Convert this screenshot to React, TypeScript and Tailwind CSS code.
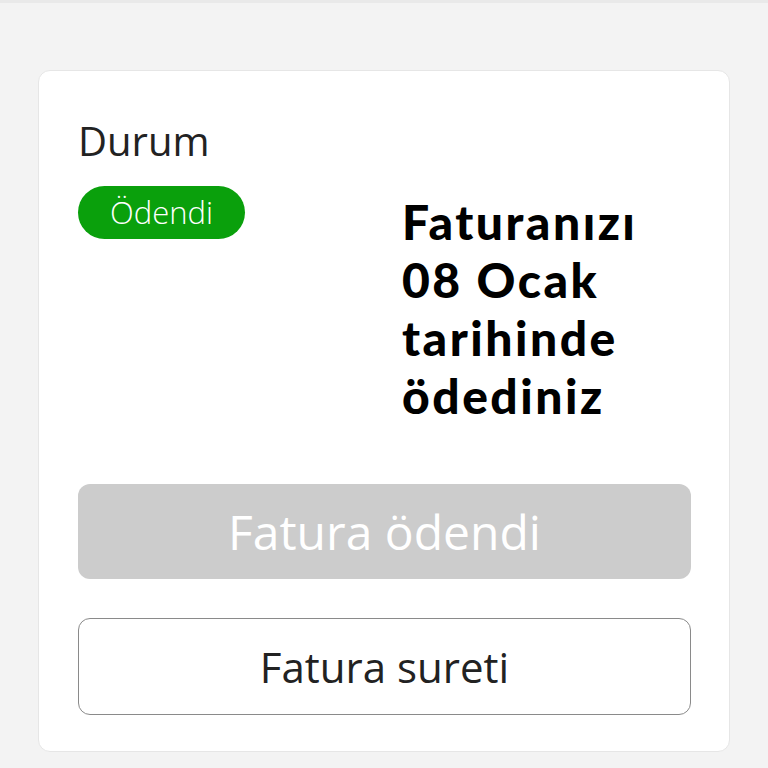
export default function App() {
  return (
    <div className="min-h-[768px] w-[768px] bg-[#f3f3f3] border-t-[3px] border-[#e9e9e9] pt-[67px] px-[38px] font-['Open_Sans',sans-serif]">
      <div className="rounded-[12px] bg-white border border-[#e6e6e6] pl-[39px] pr-[38px] pt-[46px] pb-[36px]">
        <div className="flex">
          <div className="w-[324px] shrink-0">
            <div className="text-[40px] leading-[48px] text-[#222]">Durum</div>
            <div className="mt-[21px] inline-flex h-[53px] w-[167px] items-center justify-center rounded-full bg-[#0aa00c] text-[31px] font-light text-white">
              Ödendi
            </div>
          </div>
          <div className="pt-[76px] text-[48px] font-black leading-[58px] tracking-[2.5px] text-black font-['Lato',sans-serif]">
            Faturanızı
            <br />
            08 Ocak
            <br />
            tarihinde
            <br />
            ödediniz
          </div>
        </div>
        <button
          type="button"
          disabled
          className="mt-[59px] flex h-[95px] w-full items-center justify-center rounded-[12px] bg-[#cccccc] text-[48px] text-white"
        >
          Fatura ödendi
        </button>
        <button
          type="button"
          className="mt-[39px] flex h-[97px] w-full items-center justify-center rounded-[12px] border-[1.5px] border-[#8a8a8a] bg-white text-[42px] text-[#222]"
        >
          Fatura sureti
        </button>
      </div>
    </div>
  );
}
